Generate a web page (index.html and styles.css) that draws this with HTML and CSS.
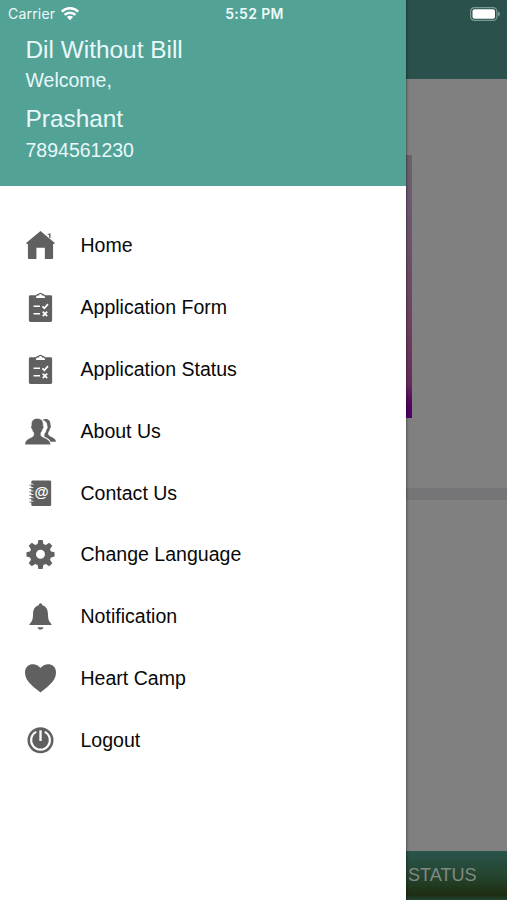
FILE: index.html
```html
<!DOCTYPE html>
<html lang="en">
<head>
<meta charset="utf-8">
<title>Dil Without Bill</title>
<link rel="stylesheet" href="styles.css">
</head>
<body>
<svg class="defs" aria-hidden="true">
  <symbol id="form" viewBox="0 0 32 32">
    <path fill="#606060" d="M5.500 3.300h6c.5-1.400 2-1.500 2.700-1.500a2 2 0 0 1 3.600 0c.7 0 2.200.1 2.700 1.500h6A1.500 1.500 0 0 1 28 4.800v24.700a1.500 1.500 0 0 1-1.500 1.500h-21A1.500 1.500 0 0 1 4 29.500V4.800a1.500 1.500 0 0 1 1.500-1.500z"/>
    <path fill="#fff" d="M11.300 6.200c0-2 1.200-2.600 3.200-2.600a1.500 1.500 0 0 1 3 0c2 0 3.200.6 3.200 2.600z"/>
    <path fill="none" stroke="#fff" stroke-width="1.500" d="M8.800 14.800h6.700M8.800 22.500h6.700"/>
    <path fill="none" stroke="#fff" stroke-width="1.800" d="M18 14.800l2 2 3.700-4.300M18.300 20.200l4.600 4.600M22.900 20.200l-4.600 4.600"/>
  </symbol>
</svg>
<div class="screen">
  <aside class="drawer">
    <header class="profile">
      <h1>Dil Without Bill</h1>
      <p>Welcome,</p>
      <h2>Prashant</h2>
      <p>7894561230</p>
    </header>
    <nav class="menu">
      <a class="item"><svg viewBox="0 0 32 32"><path d="M16 1 30.800 13.300l-1 1.200H29V29a1 1 0 0 1-1 1h-7.500V18.200h-8.700V30H4a1 1 0 0 1-1-1V14.500h-.9l-1-1.200zM22.800 4.300l3.500-1v5.500l-1.500-1.300V5.200z"/></svg><span>Home</span></a>
      <a class="item"><svg><use href="#form"/></svg><span>Application Form</span></a>
      <a class="item"><svg><use href="#form"/></svg><span>Application Status</span></a>
      <a class="item"><svg viewBox="0 0 32 32"><path d="M18 4c1-.8 2-1 3-1 4 0 5.500 2.500 5.300 6.500.8.500.6 2.600-.5 3.300-.4 2-1 3-1.800 3.900v2.500c.8 2.500 7.400 2.800 8 7.300h-5.700c-1-3-4-3.800-6.300-5v-3c1.500-1.500 2-3 2.200-4.500 1.300-1 1.400-2.800.8-4 .2-2.800-1.500-5.200-5-6z"/><path stroke="#fff" stroke-width=".5" d="M12.500 2.500c4.800 0 6.700 2.700 6.300 7.400.9.700.5 3-.5 3.600-.4 1.800-1 2.900-1.900 3.800v2.600c1 3 9.800 2.700 10.100 9.800H-.2c.3-7.100 8.200-6.800 9.200-9.800v-2.600c-.9-.9-1.500-2-1.900-3.800-1-.6-1.400-2.900-.5-3.600-.4-4.700 1.900-7.400 5.900-7.400z"/></svg><span>About Us</span></a>
      <a class="item"><svg viewBox="0 0 32 32"><path d="M8 2.500h17.500A1.500 1.500 0 0 1 27 4v23.500a1.500 1.500 0 0 1-1.500 1.500H8a1.500 1.500 0 0 1-1.500-1.500V4A1.500 1.500 0 0 1 8 2.500z"/><path fill="none" stroke="#fff" stroke-width="1" d="M5.500 6.500h3.200M5.500 10h3.200M5.500 13.500h3.200M5.500 17h3.200M5.500 20.500h3.200M5.500 24h3.200"/><path fill="none" stroke="#606060" stroke-width=".9" d="M4.500 7.400h3.500M4.500 10.900h3.500M4.500 14.400h3.500M4.500 17.900h3.500M4.500 21.400h3.500M4.500 24.900h3.500"/><text x="9.800" y="20">@</text></svg><span>Contact Us</span></a>
      <a class="item"><svg class="gear" viewBox="0 0 32 32"><path fill-rule="evenodd" d="M13.800 2h4.400l.8 4.200 2.500 1 3.500-2.400 3.200 3.200-2.400 3.500 1 2.500 3.700.8v4.400l-3.700.8-1 2.500 2.400 3.500-3.200 3.200-3.500-2.400-2.500 1-.8 4.200h-4.400l-.8-4.200-2.500-1L7 29.200 3.800 26l2.400-3.500-1-2.500-3.700-.8v-4.400l3.700-.8 1-2.500L3.800 8 7 4.800l3.500 2.400 2.500-1zM16 12.200a4.600 4.600 0 1 0 0 9.200 4.600 4.600 0 0 0 0-9.200z"/></svg><span>Change Language</span></a>
      <a class="item"><svg viewBox="0 0 32 32"><path d="M14.200 4.500c0-2.800 3.600-2.800 3.600 0 4.400 1.200 5.800 4.700 5.900 9 .1 5.300.8 7.700 3.700 10.400v1H4.600v-1c2.900-2.700 3.600-5.100 3.700-10.400.1-4.300 1.500-7.800 5.900-9zM13 27h6c-.4 3.200-5.600 3.200-6 0z"/></svg><span>Notification</span></a>
      <a class="item"><svg viewBox="0 0 32 32"><path d="M16 30.500C12 26.500 0 20 0 10-.2 0 11.500-1.200 16 5.200 20.500-1.200 32.200 0 32 10c0 10-12 16.500-16 20.500z"/></svg><span>Heart Camp</span></a>
      <a class="item"><svg viewBox="0 0 32 32"><circle cx="16" cy="15.700" r="13.400"/><path fill="none" stroke="#fff" stroke-width="2.200" d="M11.600 7.100a9.700 9.700 0 1 0 8.800 0"/><path fill="none" stroke="#fff" stroke-width="2.400" d="M16 5.500v11"/></svg><span>Logout</span></a>
    </nav>
  </aside>
  <main class="page">
    <div class="bar"></div>
    <div class="content"><div class="banner"></div></div>
    <div class="divider"></div>
    <div class="blank"></div>
    <div class="tab">STATUS</div>
  </main>
  <div class="status">
    <span class="carrier">Carrier
      <svg width="18" height="14" viewBox="0 0 18 14"><g fill="none" stroke="#fff" stroke-width="2.500"><path d="M.8 4.500a11.700 11.700 0 0 1 16.400 0M3.600 7.900a7.600 7.600 0 0 1 10.800 0"/></g><path fill="#fff" d="M5.900 10.100a4.400 4.400 0 0 1 6.200 0L9 13.300z"/></svg>
    </span>
    <span class="time">5:52 PM</span>
    <svg class="battery" width="31" height="14" viewBox="0 0 31 14"><rect x=".6" y=".6" width="26.300" height="12.800" rx="3.800" fill="none" stroke="#7c9b96" stroke-width="1.200"/><rect x="2.500" y="2.300" width="22.500" height="9.400" rx="2" fill="#fff"/><path d="M28 4.500c2.500 1 2.500 4 0 5z" fill="#7c9b96"/></svg>
  </div>
</div>
</body>
</html>
```

FILE: styles.css
```css
* { box-sizing: border-box; }
body { margin: 0; font-family: "Liberation Sans", Arial, sans-serif; }
.defs { display: none; }
.screen {
  position: relative;
  display: grid;
  grid-template-columns: 406px 1fr;
  height: 900px;
  overflow: hidden;
}
.drawer {
  z-index: 1;
  background: #fff;
  box-shadow: 0 0 3px rgba(0, 0, 0, .65);
}
.profile {
  height: 185.500px;
  padding: 34px 25.500px 0;
  background: #53a296;
  color: #e9f8fa;
}
.profile h1, .profile h2 {
  margin: 0;
  font-size: 24.400px;
  font-weight: 400;
  line-height: 31px;
}
.profile p { margin: 0; font-size: 19.500px; line-height: 31px; }
.profile h2 { padding-top: 7px; line-height: 31px; }
.profile h2 + p { line-height: 32px; }
.menu { padding-top: 29px; }
.item {
  display: flex;
  align-items: center;
  gap: 24.500px;
  height: 61.900px;
  padding-left: 25px;
  color: #080808;
  font-size: 19.540px;
}
.item svg { width: 31px; height: 31px; fill: #606060; }
.item .gear { margin-top: -2px; }
.item text { fill: #fff; font: 700 15px "Liberation Sans", sans-serif; }
.page { display: flex; flex-direction: column; background: #808080; }
.bar { height: 79px; background: #2a514c; }
.content { height: 409px; padding-top: 76px; }
.banner {
  width: 6px;
  height: 263px;
  background: linear-gradient(#686368, #6d5b73 15%, #6c5168 35%, #6e405e 65%, #672b5c 87%, #530360 95%, #4d006b);
}
.divider { height: 12px; background: #757577; }
.blank { flex: 1; }
.tab {
  height: 49px;
  padding-left: 2px;
  background: linear-gradient(#29544c, #25452f 50%, #1d2e12 90%, #204330);
  color: #7f8a82;
  font-size: 18.100px;
  line-height: 49px;
}
.status {
  position: absolute;
  z-index: 2;
  inset: 0 0 auto;
  display: grid;
  grid-template-columns: 1fr auto 1fr;
  align-items: center;
  height: 27px;
  padding: 0 6px 0 8px;
  color: #effafa;
  font: 14px "Inter", sans-serif;
}
.carrier { display: flex; align-items: center; gap: 6px; letter-spacing: .2px; }
.time { font-weight: 600; letter-spacing: .35px; }
.battery { justify-self: end; }
```
